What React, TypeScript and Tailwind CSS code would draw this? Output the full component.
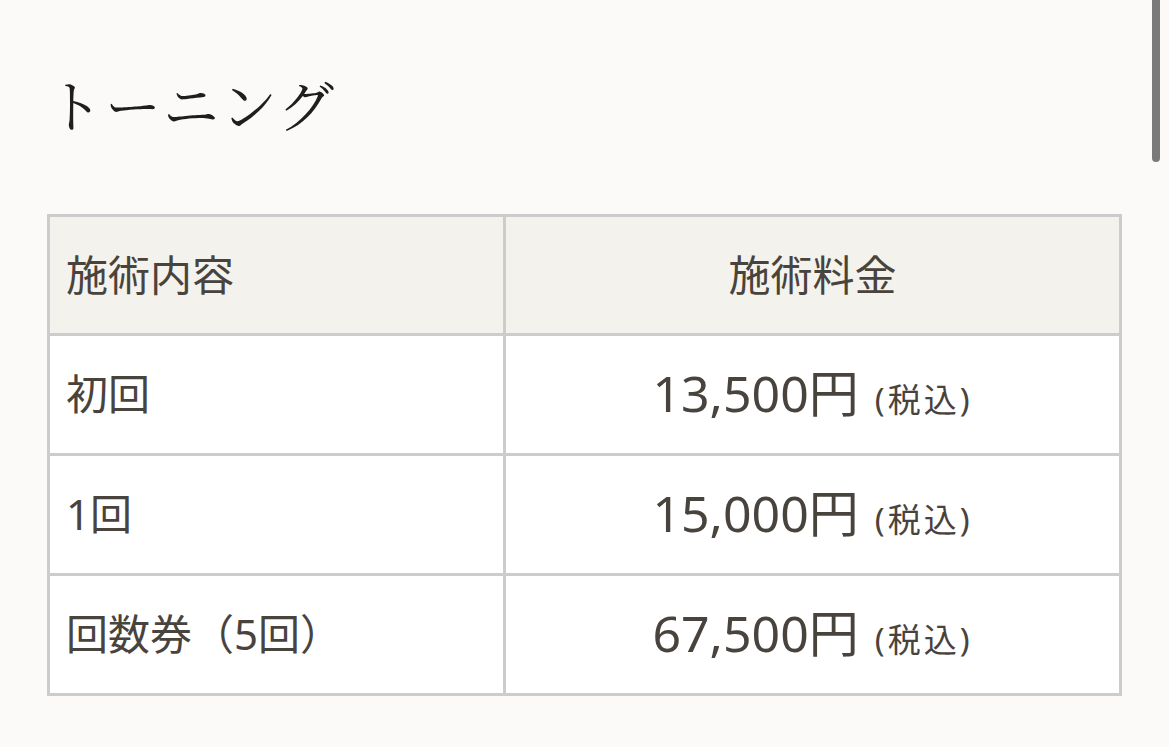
export default function App() {
  const rows = [
    { label: '初回', price: '13,500円' },
    { label: '1回', price: '15,000円' },
    { label: '回数券（5回）', price: '67,500円' },
  ]

  return (
    <div className="relative min-h-[747px] w-[1169px] overflow-hidden bg-[#fbfaf8] text-[#49433d]">
      <div className="pl-[47px] pt-[68px]">
        <h1 className="text-[56px] leading-[70px] text-[#1e1e1e] tracking-[2px] font-['Noto_Serif_CJK_JP','Liberation_Serif','Noto_Sans_CJK_JP',serif]">
          トーニング
        </h1>

        <table className="mt-[76px] w-[1075px] border-collapse font-['Noto_Sans','Noto_Sans_CJK_JP',sans-serif]">
          <thead>
            <tr className="h-[119px] bg-[#f4f2ec]">
              <th className="w-[456px] border-[3px] border-[#cccccc] pl-[16px] pb-[2px] text-left text-[42px] font-normal">
                施術内容
              </th>
              <th className="border-[3px] border-[#cccccc] pb-[2px] text-center text-[42px] font-normal">
                施術料金
              </th>
            </tr>
          </thead>
          <tbody>
            {rows.map((r) => (
              <tr key={r.price} className="h-[120px] bg-white">
                <td className="border-[3px] border-[#cccccc] pl-[16px] pb-[3px] text-[42px]">{r.label}</td>
                <td className="border-[3px] border-[#cccccc] pb-[3px] text-center">
                  <span className="text-[50px]">{r.price}</span>
                  <span className="ml-[16px] text-[33px] tracking-[3px]">(税込)</span>
                </td>
              </tr>
            ))}
          </tbody>
        </table>
      </div>

      <div className="absolute right-[9px] top-0 h-[162px] w-[8px] rounded-b-full bg-[#7a7a7a]" />
    </div>
  )
}
